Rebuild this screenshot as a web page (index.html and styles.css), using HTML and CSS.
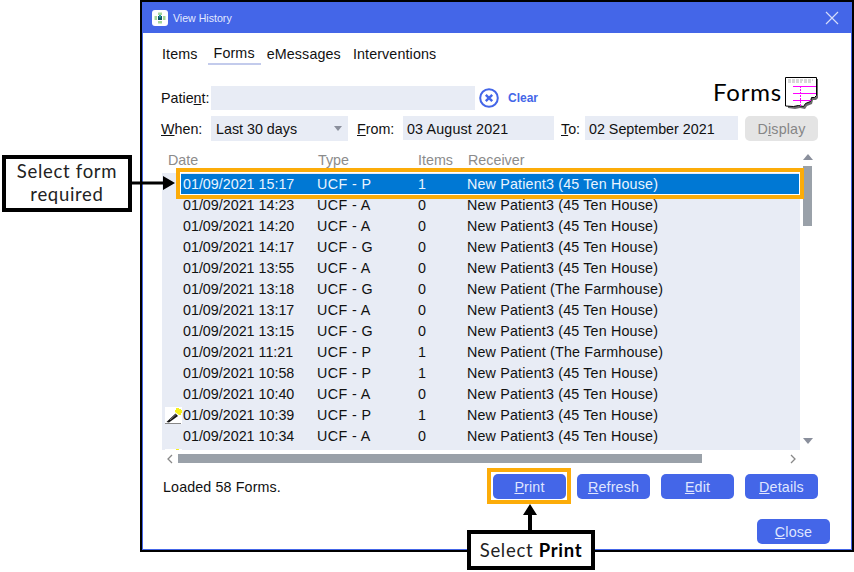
FILE: index.html
```
<!DOCTYPE html>
<html lang="en">
<head>
<meta charset="utf-8">
<title>View History</title>
<link rel="stylesheet" href="styles.css">
</head>
<body>
<div class="window">
  <div class="titlebar">
    <svg class="app-icon" viewBox="0 0 16 16" width="16" height="16"><rect width="16" height="16" rx="3" fill="#fff"/><path d="M6 2.500h4V5H6zM6 11h4v2.500H6zM2.500 6H5v4H2.500zM11 6h2.500v4H11z" fill="#a5d79a"/><path d="M6 6h4v4H6z" fill="#0f5560"/><path d="M7 5h2v2.500H7z" fill="#2aa0a8"/></svg>
    <span class="title">View History</span>
    <svg class="close-x" viewBox="0 0 14 14" width="14" height="14"><path d="M1 1l12 12M13 1L1 13" stroke="#d5dcfa" stroke-width="1.200" fill="none"/></svg>
  </div>
  <div class="content">
    <nav class="tabs">
      <span class="tab-items">Items</span>
      <span class="tab-active">Forms</span>
      <span>eMessages</span>
      <span>Interventions</span>
    </nav>
    <div class="patient-row">
      <label class="lbl lbl-patient">Patie<u>n</u>t:</label>
      <div class="field field-patient"></div>
      <svg class="clear-icon" viewBox="0 0 20 20" width="20" height="20"><circle cx="10" cy="10" r="8.800" fill="#fff" stroke="#4466e8" stroke-width="2"/><path d="M6.800 6.800l6.400 6.400M13.200 6.800l-6.400 6.400" stroke="#4466e8" stroke-width="2.400" fill="none"/></svg>
      <span class="clear">Clear</span>
      <div class="brand">
        <span class="brand-text">Forms</span>
        <svg class="form-icon" viewBox="0 0 33 32" width="33" height="32">
          <path d="M3 2h30v19l-2 2h-3l-1 4-5 2-2 3-5-1-5 1-7-1z" fill="#6b6b6b"/>
          <path d="M.5.500h31v18l-2 2h-3l-1 4-5 2-2 3-5-1-5 1-8-.5z" fill="#fff" stroke="#000"/>
          <path d="M3 3h25M3 5h14M19 5h8" stroke="#b0b0b0" stroke-dasharray="3 1" fill="none"/>
          <path d="M8 9.500h23M8 16.500h23M8 23.500h18" stroke="#ff00ff" fill="none"/>
          <path d="M15.500 9v20" stroke="#ff00ff" stroke-dasharray="2 1" fill="none"/>
        </svg>
      </div>
    </div>
    <div class="filter-row">
      <label class="lbl lbl-when"><u>W</u>hen:</label>
      <div class="field select">Last 30 days<i class="caret"></i></div>
      <label class="lbl lbl-from"><u>F</u>rom:</label>
      <div class="field date date-from">03 August 2021</div>
      <label class="lbl lbl-to"><u>T</u>o:</label>
      <div class="field date date-to">02 September 2021</div>
      <button class="btn btn-disabled">D<u>i</u>splay</button>
    </div>
    <div class="grid-wrap">
      <div class="grid">
        <div class="grid-head">
          <span>Date</span><span>Type</span><span>Items</span><span>Receiver</span>
        </div>
        <div class="grid-body">
          <div class="row row-sel"><span>01/09/2021 15:17</span><span>UCF - P</span><span>1</span><span>New Patient3 (45 Ten House)</span></div>
          <div class="row"><span>01/09/2021 14:23</span><span>UCF - A</span><span>0</span><span>New Patient3 (45 Ten House)</span></div>
          <div class="row"><span>01/09/2021 14:20</span><span>UCF - A</span><span>0</span><span>New Patient3 (45 Ten House)</span></div>
          <div class="row"><span>01/09/2021 14:17</span><span>UCF - G</span><span>0</span><span>New Patient3 (45 Ten House)</span></div>
          <div class="row"><span>01/09/2021 13:55</span><span>UCF - A</span><span>0</span><span>New Patient3 (45 Ten House)</span></div>
          <div class="row"><span>01/09/2021 13:18</span><span>UCF - G</span><span>0</span><span>New Patient (The Farmhouse)</span></div>
          <div class="row"><span>01/09/2021 13:17</span><span>UCF - A</span><span>0</span><span>New Patient3 (45 Ten House)</span></div>
          <div class="row"><span>01/09/2021 13:15</span><span>UCF - G</span><span>0</span><span>New Patient3 (45 Ten House)</span></div>
          <div class="row"><span>01/09/2021 11:21</span><span>UCF - P</span><span>1</span><span>New Patient (The Farmhouse)</span></div>
          <div class="row"><span>01/09/2021 10:58</span><span>UCF - P</span><span>1</span><span>New Patient3 (45 Ten House)</span></div>
          <div class="row"><span>01/09/2021 10:40</span><span>UCF - A</span><span>0</span><span>New Patient3 (45 Ten House)</span></div>
          <div class="row">
            <svg class="pen" viewBox="0 0 17 17" width="17" height="17"><rect width="17" height="17" fill="#fff"/><path d="M0 16.500h16" stroke="#888"/><path d="M1.500 15l9-8.500 2.500 2.500-9 6.500z" fill="#111"/><path d="M5 13l6-5.500" stroke="#777" fill="none"/><path d="M11 1h3v1h2v1h1v3h-1v2h-2L10 5V3h1z" fill="#f5f01a"/></svg>
            <span>01/09/2021 10:39</span><span>UCF - P</span><span>1</span><span>New Patient3 (45 Ten House)</span>
          </div>
          <div class="row"><span>01/09/2021 10:34</span><span>UCF - A</span><span>0</span><span>New Patient3 (45 Ten House)</span></div>
          <div class="row">
            <svg class="pen" viewBox="0 0 17 17" width="17" height="17"><rect width="17" height="17" fill="#fff"/><path d="M11 0h3v1h2v1h1v3h-1v2h-2L10 5V2h1z" fill="#f5f01a"/></svg>
          </div>
        </div>
      </div>
      <div class="vscroll">
        <i class="arrow-up"></i>
        <i class="vthumb"></i>
        <i class="arrow-down"></i>
      </div>
    </div>
    <div class="hscroll">
      <svg class="chev" viewBox="0 0 8 10" width="8" height="10"><path d="M6 1L2 5l4 4" stroke="#888" stroke-width="1.300" fill="none"/></svg>
      <div class="htrack"><i class="hthumb"></i></div>
      <svg class="chev" viewBox="0 0 8 10" width="8" height="10"><path d="M2 1l4 4-4 4" stroke="#888" stroke-width="1.300" fill="none"/></svg>
    </div>
    <div class="action-row">
      <span class="status">Loaded 58 Forms.</span>
      <button class="btn"><u>P</u>rint</button>
      <button class="btn"><u>R</u>efresh</button>
      <button class="btn"><u>E</u>dit</button>
      <button class="btn"><u>D</u>etails</button>
    </div>
    <div class="close-row">
      <button class="btn"><u>C</u>lose</button>
    </div>
  </div>
</div>

<div class="hl hl-row"></div>
<div class="hl hl-print"></div>
<div class="callout callout-form">Select form<br>required</div>
<div class="callout callout-print">Select <b>Print</b></div>
<svg class="pointer pointer-form" viewBox="0 0 44 14" width="44" height="14"><path d="M0 5.500h32V0l12 7-12 7V8.500H0z" fill="#000"/></svg>
<svg class="pointer pointer-print" viewBox="0 0 14 26" width="14" height="26"><path d="M5 26V11H0L7 0l7 11H9v15z" fill="#000"/></svg>
</body>
</html>
```
FILE: styles.css
```
* { box-sizing: border-box; }
html, body { margin: 0; padding: 0; }
body {
  position: relative;
  width: 854px;
  height: 572px;
  overflow: hidden;
  background: #fff;
  font-family: "Liberation Sans", Arial, sans-serif;
  font-size: 14.3px;
  color: #111;
}
.window {
  margin-left: 140px;
  width: 714px;
  height: 552px;
  border: 2px solid #000;
  background: #fff;
  display: flex;
  flex-direction: column;
}
.titlebar {
  height: 31px;
  flex: none;
  background: #4466e8;
  display: flex;
  align-items: center;
  padding: 0 13px 0 10px;
  color: #e3e9ff;
  font-size: 10.6px;
}
.app-icon { flex: none; }
.title { margin-left: 5px; }
.close-x { margin-left: auto; }
.content {
  flex: 1;
  border: 1px solid #4466e8;
  border-top: 0;
  padding: 10px 0 0 18px;
  display: flex;
  flex-direction: column;
  min-height: 0;
}
.tabs {
  display: flex;
  gap: 12px;
  margin-left: 1px;
  height: 22px;
  align-items: flex-start;
  line-height: 22px;
  letter-spacing: .12px;
}
.tab-items { margin-right: -2px; }
.tab-active {
  padding: 0 6px;
  margin-right: -6px;
  height: 22px;
  line-height: 20px;
  border-bottom: 2px solid #c3cbec;
}
.lbl { flex: none; display: block; }
.field {
  background: #e8ecf5;
  flex: none;
  line-height: 24px;
  padding-left: 5px;
}
.patient-row {
  display: flex;
  align-items: center;
  margin-top: 20px;
  height: 25px;
}
.lbl-patient { width: 50px; line-height: 26px; }
.field-patient { width: 264px; height: 24px; }
.clear-icon { margin-left: 4px; flex: none; }
.clear { margin-left: 9px; color: #4466e8; font-weight: bold; font-size: 12px; }
.brand {
  margin-left: auto;
  margin-right: 33px;
  margin-top: -10px;
  display: flex;
  align-items: center;
}
.brand-text {
  font-family: "Lato", sans-serif;
  font-size: 24px;
  letter-spacing: .8px;
  color: #000;
  margin-right: 3px;
  margin-top: -2px;
}
.form-icon { flex: none; display: block; }
.filter-row {
  display: flex;
  align-items: flex-start;
  margin-top: 6px;
  height: 25px;
}
.filter-row .lbl { line-height: 26px; }
.lbl-when { width: 50px; }
.select {
  position: relative;
  width: 137px;
  height: 25px;
  line-height: 26px;
}
.caret {
  position: absolute;
  right: 6px;
  top: 10px;
  border: 4.500px solid transparent;
  border-top: 5px solid #8a8f9c;
  border-bottom: 0;
}
.lbl-from { margin-left: 9px; width: 46px; }
.date { height: 24px; padding-left: 4px; line-height: 26px; }
.date-from { width: 151px; letter-spacing: .15px; }
.lbl-to { margin-left: 7px; width: 24px; }
.date-to { width: 153px; }
.btn {
  flex: none;
  width: 73px;
  height: 25px;
  border: 0;
  border-radius: 5px;
  background: #4466e8;
  color: #dfe5ff;
  font: inherit;
  padding: 1px 0 0;
  line-height: 24px;
  letter-spacing: .15px;
}
.btn-disabled {
  margin-left: 7px;
  background: #e4e4e4;
  color: #868686;
}
.grid-wrap {
  display: flex;
  margin-top: 12px;
  margin-left: 1px;
  height: 297px;
}
.grid {
  width: 638px;
  display: flex;
  flex-direction: column;
}
.grid-head {
  height: 20px;
  flex: none;
  display: grid;
  grid-template-columns: 150px 100px 50px 1fr;
  padding-left: 6px;
  color: #8b8b8b;
  line-height: 15px;
}
.grid-body {
  flex: 1;
  background: #e8ecf5;
  overflow: hidden;
  padding-top: 1px;
}
.row {
  position: relative;
  height: 21px;
  margin: 0 1px 0 19px;
  padding-left: 2px;
  display: grid;
  grid-template-columns: 134px 101px 49px 1fr;
  line-height: 21px;
}
.row span:nth-of-type(2) { letter-spacing: .4px; }
.row span:nth-of-type(4) { letter-spacing: .17px; }
.row-sel { background: #0078d4; color: #e9f4ff; }
.pen {
  position: absolute;
  left: -16px;
  top: 2px;
}
.vscroll {
  width: 9px;
  margin-left: 3px;
  display: flex;
  flex-direction: column;
  align-items: center;
}
.arrow-up {
  margin-top: 1px;
  border: 5px solid transparent;
  border-top: 0;
  border-bottom: 6px solid #8a8f9c;
}
.vthumb {
  width: 9px;
  height: 60px;
  margin-top: 6px;
  background: #9aa1a9;
}
.arrow-down {
  margin-top: auto;
  margin-bottom: 6px;
  border: 5px solid transparent;
  border-bottom: 0;
  border-top: 6px solid #8a8f9c;
}
.hscroll {
  display: flex;
  align-items: center;
  margin-top: 4px;
  margin-left: 5px;
  width: 628px;
  height: 9px;
}
.chev { flex: none; }
.htrack { width: 608px; height: 9px; margin: 0 3px 0 4px; flex: none; }
.hthumb { display: block; width: 524px; height: 9px; background: #9aa1a9; }
.action-row {
  display: flex;
  align-items: center;
  gap: 11px;
  margin-top: 11px;
  margin-left: 2px;
  height: 25px;
  width: 655px;
}
.status { margin-right: auto; letter-spacing: .12px; }
.close-row {
  display: flex;
  justify-content: flex-end;
  margin-top: 20px;
  width: 669px;
}
.hl {
  position: absolute;
  border: 4px solid #fcac09;
  pointer-events: none;
}
.hl-row {
  left: 176px;
  top: 168px;
  width: 628px;
  height: 31px;
  box-shadow: inset 0 0 0 1px #fff;
}
.hl-print {
  left: 487px;
  top: 468px;
  width: 84px;
  height: 36px;
}
.callout {
  position: absolute;
  background: #fff;
  border: 4px solid #000;
  font-family: "Lato", sans-serif;
  font-size: 18.500px;
  font-weight: 400;
  letter-spacing: .7px;
  color: #222;
  text-align: center;
  line-height: 23px;
}
.callout-form {
  left: 2px;
  top: 155px;
  width: 130px;
  height: 57px;
  padding-top: 1px;
}
.callout-print {
  left: 467px;
  top: 530px;
  width: 128px;
  height: 40px;
  line-height: 32px;
}
.callout-print b { color: #000; font-weight: 700; }
.pointer { position: absolute; display: block; }
.pointer-form { left: 131px; top: 176px; }
.pointer-print { left: 523px; top: 504px; }
```
